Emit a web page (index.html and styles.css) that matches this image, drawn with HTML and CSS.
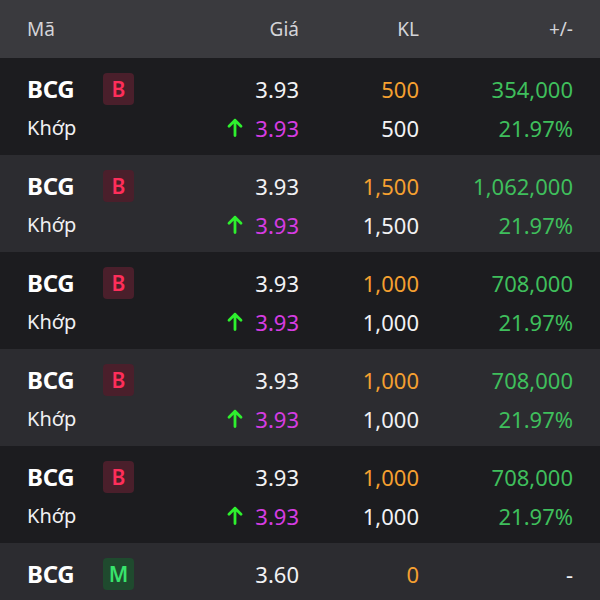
FILE: index.html
```html
<!DOCTYPE html>
<html>
<head>
<meta charset="utf-8">
<link rel="stylesheet" href="styles.css">
</head>
<body>
<div class="board">
  <div class="head grid">
    <div class="c1">Mã</div>
    <div class="num">Giá</div>
    <div class="num">KL</div>
    <div class="num">+/-</div>
  </div>

  <div class="row dark grid">
    <div class="c1 top"><span class="sym">BCG</span><span class="badge b">B</span></div>
    <div class="num white">3.93</div>
    <div class="num orange">500</div>
    <div class="num green">354,000</div>
    <div class="c1 sub">Khớp</div>
    <div class="num purple"><svg class="arrow" viewBox="0 0 16 19"><path d="M8 17.5V2.2M2 8.2L8 2.2l6 6" fill="none" stroke="#2ef02e" stroke-width="2.8" stroke-linecap="round" stroke-linejoin="round"/></svg>3.93</div>
    <div class="num white">500</div>
    <div class="num green">21.97%</div>
  </div>

  <div class="row light grid">
    <div class="c1 top"><span class="sym">BCG</span><span class="badge b">B</span></div>
    <div class="num white">3.93</div>
    <div class="num orange">1,500</div>
    <div class="num green">1,062,000</div>
    <div class="c1 sub">Khớp</div>
    <div class="num purple"><svg class="arrow" viewBox="0 0 16 19"><path d="M8 17.5V2.2M2 8.2L8 2.2l6 6" fill="none" stroke="#2ef02e" stroke-width="2.8" stroke-linecap="round" stroke-linejoin="round"/></svg>3.93</div>
    <div class="num white">1,500</div>
    <div class="num green">21.97%</div>
  </div>

  <div class="row dark grid">
    <div class="c1 top"><span class="sym">BCG</span><span class="badge b">B</span></div>
    <div class="num white">3.93</div>
    <div class="num orange">1,000</div>
    <div class="num green">708,000</div>
    <div class="c1 sub">Khớp</div>
    <div class="num purple"><svg class="arrow" viewBox="0 0 16 19"><path d="M8 17.5V2.2M2 8.2L8 2.2l6 6" fill="none" stroke="#2ef02e" stroke-width="2.8" stroke-linecap="round" stroke-linejoin="round"/></svg>3.93</div>
    <div class="num white">1,000</div>
    <div class="num green">21.97%</div>
  </div>

  <div class="row light grid">
    <div class="c1 top"><span class="sym">BCG</span><span class="badge b">B</span></div>
    <div class="num white">3.93</div>
    <div class="num orange">1,000</div>
    <div class="num green">708,000</div>
    <div class="c1 sub">Khớp</div>
    <div class="num purple"><svg class="arrow" viewBox="0 0 16 19"><path d="M8 17.5V2.2M2 8.2L8 2.2l6 6" fill="none" stroke="#2ef02e" stroke-width="2.8" stroke-linecap="round" stroke-linejoin="round"/></svg>3.93</div>
    <div class="num white">1,000</div>
    <div class="num green">21.97%</div>
  </div>

  <div class="row dark grid">
    <div class="c1 top"><span class="sym">BCG</span><span class="badge b">B</span></div>
    <div class="num white">3.93</div>
    <div class="num orange">1,000</div>
    <div class="num green">708,000</div>
    <div class="c1 sub">Khớp</div>
    <div class="num purple"><svg class="arrow" viewBox="0 0 16 19"><path d="M8 17.5V2.2M2 8.2L8 2.2l6 6" fill="none" stroke="#2ef02e" stroke-width="2.8" stroke-linecap="round" stroke-linejoin="round"/></svg>3.93</div>
    <div class="num white">1,000</div>
    <div class="num green">21.97%</div>
  </div>

  <div class="row light grid last">
    <div class="c1 top"><span class="sym">BCG</span><span class="badge m">M</span></div>
    <div class="num white">3.60</div>
    <div class="num orange">0</div>
    <div class="num white">-</div>
  </div>
</div>
</body>
</html>
```

FILE: styles.css
```css
html, body {
  margin: 0;
  padding: 0;
  background: #2c2c30;
}
body {
  width: 600px;
  height: 600px;
  overflow: hidden;
  font-family: "Noto Sans", "Open Sans", sans-serif;
}
.board {
  width: 600px;
}
.grid {
  display: grid;
  grid-template-columns: 152px 120px 120px 154px;
  padding: 0 27px;
  align-items: center;
}
.head {
  height: 58px;
  background: #3a3a3e;
  color: #d4d4d8;
  font-size: 19px;
}
.row {
  height: 97px;
  box-sizing: border-box;
  padding-top: 11px;
  grid-auto-rows: 39px;
  align-content: start;
  font-size: 22px;
}
.row.last {
  height: 57px;
}
.dark { background: #1c1c1f; }
.light { background: #2c2c30; }
.num {
  text-align: right;
  display: flex;
  justify-content: flex-end;
  align-items: center;
}
.top {
  display: flex;
  align-items: center;
}
.sym {
  font-weight: 700;
  font-size: 24px;
  color: #ffffff;
  width: 76px;
  letter-spacing: -0.3px;
}
.badge {
  width: 31px;
  height: 32px;
  border-radius: 4px;
  display: flex;
  align-items: center;
  justify-content: center;
  font-size: 21px;
  font-weight: 600;
}
.badge.b {
  background: #4a1f2b;
  color: #ff2e5a;
}
.badge.m {
  background: #1f4a2e;
  color: #38e46c;
}
.sub {
  color: #f0f0f2;
  font-size: 20px;
}
.white { color: #f2f2f4; }
.orange { color: #f5a030; }
.green { color: #3fbf5c; }
.purple { color: #d63ce2; }
.arrow {
  width: 16px;
  height: 19px;
  margin-right: 12px;
}
```
